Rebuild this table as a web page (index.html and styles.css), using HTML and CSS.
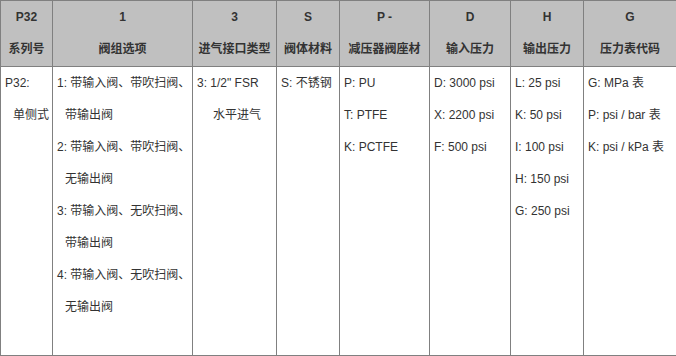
FILE: index.html
```html
<!DOCTYPE html>
<html lang="zh-CN">
<head>
<meta charset="utf-8">
<title>P32 选型表</title>
<link rel="stylesheet" href="styles.css">
</head>
<body>
<table class="spec">
  <colgroup>
    <col class="c1"><col class="c2"><col class="c3"><col class="c4">
    <col class="c5"><col class="c6"><col class="c7"><col class="c8">
  </colgroup>
  <thead>
    <tr>
      <th><div>P32</div><div>系列号</div></th>
      <th><div>1</div><div>阀组选项</div></th>
      <th><div>3</div><div>进气接口类型</div></th>
      <th><div>S</div><div>阀体材料</div></th>
      <th><div>P -</div><div>减压器阀座材</div></th>
      <th><div>D</div><div>输入压力</div></th>
      <th><div>H</div><div>输出压力</div></th>
      <th><div>G</div><div>压力表代码</div></th>
    </tr>
  </thead>
  <tbody>
    <tr>
      <td><div>P32:</div><div class="cont">单侧式</div></td>
      <td>
        <div>1: 带输入阀、带吹扫阀、</div><div class="cont">带输出阀</div>
        <div>2: 带输入阀、带吹扫阀、</div><div class="cont">无输出阀</div>
        <div>3: 带输入阀、无吹扫阀、</div><div class="cont">带输出阀</div>
        <div>4: 带输入阀、无吹扫阀、</div><div class="cont">无输出阀</div>
      </td>
      <td><div>3: 1/2" FSR</div><div class="cont wide">水平进气</div></td>
      <td><div>S: 不锈钢</div></td>
      <td><div>P: PU</div><div>T: PTFE</div><div>K: PCTFE</div></td>
      <td><div>D: 3000 psi</div><div>X: 2200 psi</div><div>F: 500 psi</div></td>
      <td><div>L: 25 psi</div><div>K: 50 psi</div><div>I: 100 psi</div><div>H: 150 psi</div><div>G: 250 psi</div></td>
      <td><div>G: MPa 表</div><div>P: psi / bar 表</div><div>K: psi / kPa 表</div></td>
    </tr>
  </tbody>
</table>
</body>
</html>
```
FILE: styles.css
```css
html, body {
  margin: 0;
  padding: 0;
  background: #ffffff;
}

.spec {
  width: 676px;
  table-layout: fixed;
  border-collapse: collapse;
  font-family: "Liberation Sans", Arial, "Noto Sans CJK SC", sans-serif;
  font-size: 12px;
  line-height: 32px;
  color: #333333;
}

.c1 { width: 52px; }
.c2 { width: 140px; }
.c3 { width: 84px; }
.c4 { width: 63px; }
.c5 { width: 90px; }
.c6 { width: 81px; }
.c7 { width: 73px; }
.c8 { width: 93px; }

.spec th,
.spec td {
  border: 1px solid #808080;
  white-space: nowrap;
  overflow: hidden;
}

.spec th {
  background: #c0c0c0;
  font-weight: bold;
  text-align: center;
  padding: 0 0 1px;
  vertical-align: top;
}

.spec td {
  text-align: left;
  vertical-align: top;
  padding: 0 4px 32px;
}

.cont {
  padding-left: 8px;
}

.cont.wide {
  padding-left: 16px;
}
```
